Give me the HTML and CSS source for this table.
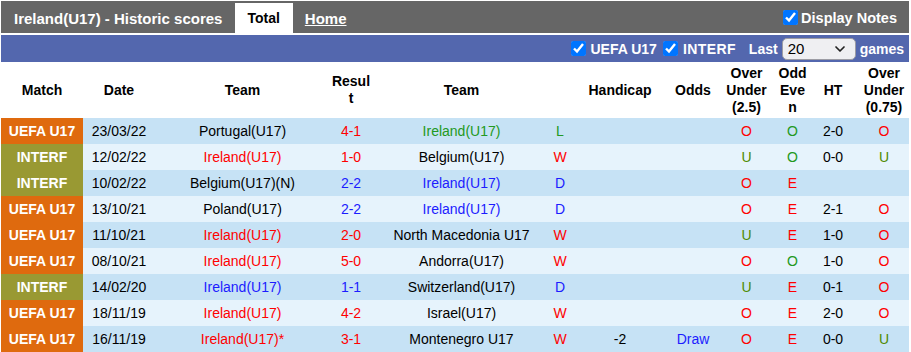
FILE: index.html
```html
<!DOCTYPE html>
<html lang="en">
<head>
<meta charset="utf-8">
<title>Ireland(U17) - Historic scores</title>
<link rel="stylesheet" href="styles.css">
</head>
<body>
<div class="wrap">
  <div class="topbar">
    <div class="title">Ireland(U17) - Historic scores</div>
    <div class="tab tab-active">Total</div>
    <a class="tab tab-link" href="#">Home</a>
    <label class="notes"><input type="checkbox" class="cb" checked><span>Display Notes</span></label>
  </div>
  <div class="filterbar">
    <label class="flt"><input type="checkbox" class="cb" checked><span>UEFA U17</span></label>
    <label class="flt"><input type="checkbox" class="cb" checked><span class="interf-t">INTERF</span></label>
    <span class="last">Last</span>
    <div class="select"><span>20</span><svg width="16" height="16" viewBox="0 0 16 16"><path d="M4 6 L8 10 L12 6" fill="none" stroke="#222" stroke-width="1.7" stroke-linecap="round" stroke-linejoin="round"/></svg></div>
    <span class="games">games</span>
  </div>
  <table class="scores">
    <colgroup>
      <col class="c-match"><col class="c-date"><col class="c-team"><col class="c-res"><col class="c-team2"><col class="c-wl"><col class="c-hc"><col class="c-odds"><col class="c-ou"><col class="c-oe"><col class="c-ht"><col class="c-ou2">
    </colgroup>
    <thead>
      <tr>
        <th>Match</th><th>Date</th><th>Team</th><th>Resul<br>t</th><th>Team</th><th></th><th>Handicap</th><th>Odds</th><th>Over<br>Under<br>(2.5)</th><th>Odd<br>Eve<br>n</th><th>HT</th><th>Over<br>Under<br>(0.75)</th>
      </tr>
    </thead>
    <tbody>
      <tr class="odd">
        <td class="m uefa">UEFA U17</td><td>23/03/22</td><td>Portugal(U17)</td><td class="red">4-1</td><td class="green">Ireland(U17)</td><td class="green">L</td><td></td><td></td><td class="red">O</td><td class="green">O</td><td>2-0</td><td class="red">O</td>
      </tr>
      <tr class="even">
        <td class="m interf">INTERF</td><td>12/02/22</td><td class="red">Ireland(U17)</td><td class="red">1-0</td><td>Belgium(U17)</td><td class="red">W</td><td></td><td></td><td class="olive">U</td><td class="green">O</td><td>0-0</td><td class="olive">U</td>
      </tr>
      <tr class="odd">
        <td class="m interf">INTERF</td><td>10/02/22</td><td>Belgium(U17)(N)</td><td class="blue">2-2</td><td class="blue">Ireland(U17)</td><td class="blue">D</td><td></td><td></td><td class="red">O</td><td class="red">E</td><td></td><td></td>
      </tr>
      <tr class="even">
        <td class="m uefa">UEFA U17</td><td>13/10/21</td><td>Poland(U17)</td><td class="blue">2-2</td><td class="blue">Ireland(U17)</td><td class="blue">D</td><td></td><td></td><td class="red">O</td><td class="red">E</td><td>2-1</td><td class="red">O</td>
      </tr>
      <tr class="odd">
        <td class="m uefa">UEFA U17</td><td>11/10/21</td><td class="red">Ireland(U17)</td><td class="red">2-0</td><td>North Macedonia U17</td><td class="red">W</td><td></td><td></td><td class="olive">U</td><td class="red">E</td><td>1-0</td><td class="red">O</td>
      </tr>
      <tr class="even">
        <td class="m uefa">UEFA U17</td><td>08/10/21</td><td class="red">Ireland(U17)</td><td class="red">5-0</td><td>Andorra(U17)</td><td class="red">W</td><td></td><td></td><td class="red">O</td><td class="green">O</td><td>1-0</td><td class="red">O</td>
      </tr>
      <tr class="odd">
        <td class="m interf">INTERF</td><td>14/02/20</td><td class="blue">Ireland(U17)</td><td class="blue">1-1</td><td>Switzerland(U17)</td><td class="blue">D</td><td></td><td></td><td class="olive">U</td><td class="red">E</td><td>0-1</td><td class="red">O</td>
      </tr>
      <tr class="even">
        <td class="m uefa">UEFA U17</td><td>18/11/19</td><td class="red">Ireland(U17)</td><td class="red">4-2</td><td>Israel(U17)</td><td class="red">W</td><td></td><td></td><td class="red">O</td><td class="red">E</td><td>2-0</td><td class="red">O</td>
      </tr>
      <tr class="odd">
        <td class="m uefa">UEFA U17</td><td>16/11/19</td><td class="red">Ireland(U17)*</td><td class="red">3-1</td><td>Montenegro U17</td><td class="red">W</td><td>-2</td><td class="blue">Draw</td><td class="red">O</td><td class="red">E</td><td>0-0</td><td class="olive">U</td>
      </tr>
    </tbody>
  </table>
</div>
</body>
</html>
```

FILE: styles.css
```css
html, body {
  margin: 0;
  padding: 0;
  background: #ffffff;
}
body {
  font-family: "Liberation Sans", Arial, sans-serif;
  font-size: 14px;
  color: #000;
}
.wrap {
  width: 908px;
  margin: 1px 0 0 1px;
}
.topbar {
  display: flex;
  align-items: stretch;
  height: 30px;
  padding-top: 2px;
  background: #666666;
  color: #fff;
  font-weight: bold;
}
.title {
  display: flex;
  align-items: center;
  padding-left: 13px;
  font-size: 15px;
}
.tab {
  display: flex;
  align-items: center;
  font-size: 14px;
}
.tab-active {
  margin-left: 13px;
  padding: 0 13px 0 12px;
  background: #fff;
  color: #000;
}
.tab-link {
  margin-left: 12px;
  color: #fff;
  text-decoration: underline;
  font-size: 15px;
}
.notes {
  margin-left: auto;
  display: flex;
  align-items: center;
  padding-right: 12px;
  padding-bottom: 1px;
  font-size: 14.5px;
}
.cb {
  width: 15px;
  height: 15px;
  margin: 0 3px 0 0;
  accent-color: #0075ff;
}
.filterbar {
  margin-top: 2px;
  height: 27px;
  display: flex;
  align-items: center;
  justify-content: flex-end;
  padding-right: 5px;
  background: #5367ae;
  color: #fff;
  font-weight: bold;
}
.flt {
  display: flex;
  align-items: center;
  margin-left: 6px;
}
.flt .cb {
  margin-right: 5px;
}
.interf-t {
  letter-spacing: 0.4px;
}
.last {
  margin-left: 13px;
}
.select {
  margin-left: 4px;
  width: 74px;
  height: 22px;
  box-sizing: border-box;
  border: 1px solid #9c9ca4;
  border-radius: 5px;
  background: #efeff2;
  color: #000;
  font-weight: normal;
  font-size: 15px;
  display: flex;
  align-items: center;
  justify-content: space-between;
  padding: 0 7px 0 5px;
}
.select svg {
  display: block;
}
.games {
  margin-left: 4px;
}
.scores {
  width: 908px;
  table-layout: fixed;
  border-collapse: collapse;
  border-spacing: 0;
}
.c-match { width: 82px; }
.c-date { width: 72px; }
.c-team { width: 175px; }
.c-res { width: 42px; }
.c-team2 { width: 179px; }
.c-wl { width: 18px; }
.c-hc { width: 102px; }
.c-odds { width: 44px; }
.c-ou { width: 63px; }
.c-oe { width: 29px; }
.c-ht { width: 52px; }
.c-ou2 { width: 50px; }
.scores th {
  height: 56px;
  padding: 0;
  font-weight: bold;
  font-size: 14px;
  line-height: 17px;
  text-align: center;
  vertical-align: middle;
  background: #fff;
}
.scores td {
  height: 26px;
  padding: 0;
  text-align: center;
  vertical-align: middle;
  white-space: nowrap;
  font-size: 14px;
}
.odd td { background: #c6e2f5; }
.even td { background: #e6f3fc; }
.scores td.m {
  color: #fff;
  font-weight: bold;
}
.scores td.uefa { background: #df6a0e; }
.scores td.interf { background: #999933; }
.red { color: #ff0000; }
.blue { color: #1c1cff; }
.green { color: #229922; }
.olive { color: #4f8a00; }
```
